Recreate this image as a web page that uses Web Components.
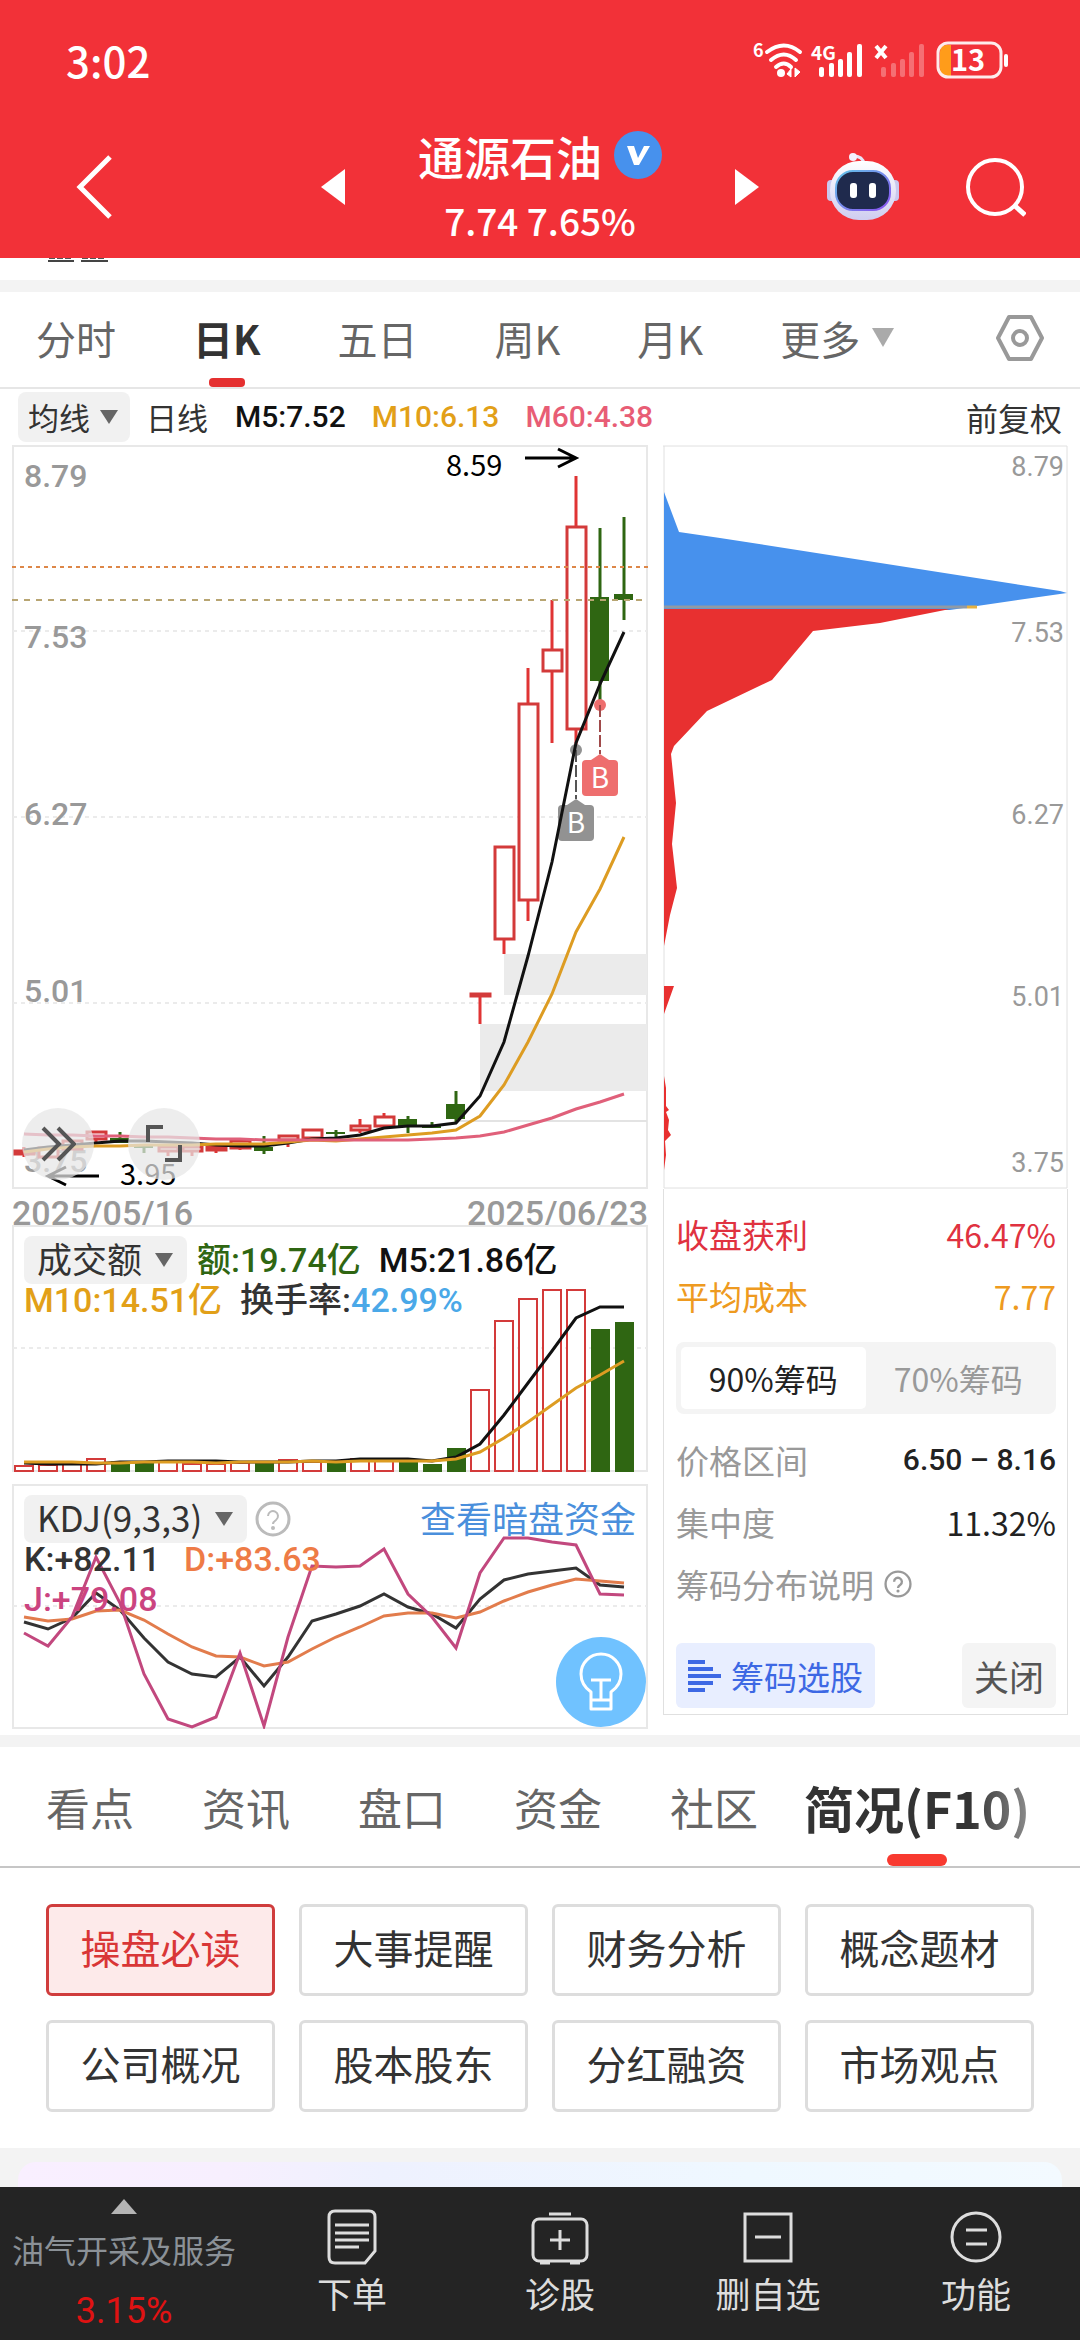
<!DOCTYPE html>
<html lang="zh-CN">

<head>
    <meta charset="UTF-8">
    <meta name="viewport" content="width=device-width, initial-scale=1">
    <title>通源石油</title>
    <style>
        body {
            margin: 0;
            background: #fff;
            color: #333;
            font-family: "Noto Sans CJK SC", sans-serif;
            --num: Roboto, "Noto Sans CJK SC", sans-serif;
        }

        stock-page {
            min-height: 100vh;
        }
    </style>
</head>

<body>
    <stock-page>
        <status-bar></status-bar>
        <title-bar name="通源石油" price="7.74 7.65%"></title-bar>
        <period-tabs></period-tabs>
        <average-row></average-row>
        <chart-area>
            <k-chart slot="left"></k-chart>
            <date-range slot="left"><span>2025/05/16</span><span>2025/06/23</span></date-range>
            <volume-chart slot="left"></volume-chart>
            <kdj-chart slot="left"></kdj-chart>
            <chip-chart slot="right"></chip-chart>
            <chip-panel slot="right"></chip-panel>
        </chart-area>
        <info-tabs></info-tabs>
        <topic-grid>
            <topic-button active>操盘必读</topic-button>
            <topic-button>大事提醒</topic-button>
            <topic-button>财务分析</topic-button>
            <topic-button>概念题材</topic-button>
            <topic-button>公司概况</topic-button>
            <topic-button>股本股东</topic-button>
            <topic-button>分红融资</topic-button>
            <topic-button>市场观点</topic-button>
        </topic-grid>
        <promo-card></promo-card>
        <bottom-bar></bottom-bar>
    </stock-page>
</body>

<script>
    const BASE = `
        :host, * { box-sizing: border-box; }
        button, select { font: inherit; color: inherit; border: 0; padding: 0; margin: 0; background: none; cursor: pointer; }
        svg { display: block; }
    `;

    function define(name, css, html) {
        const template = document.createElement('template');
        template.innerHTML = `<style>${BASE}${css}</style>${typeof html === 'string' ? html : ''}`;
        customElements.define(name, class extends HTMLElement {
            constructor() {
                super();
                this.attachShadow({ mode: 'open' });
                this.shadowRoot.appendChild(template.content.cloneNode(true));
                if (typeof html === 'function') {
                    this.shadowRoot.innerHTML += html(this);
                }
            }
        });
    }

    // one column per trading day, 24 units apart
    const dayX = i => 24 + 24 * i;
    const line = (ys, color, width = 3) =>
        `<polyline points="${ys.map((y, i) => dayX(i) + ',' + y).join(' ')}" fill="none" stroke="${color}" stroke-width="${width}"/>`;
    const gridLine = y =>
        `<line x1="13" x2="647" y1="${y}" y2="${y}" stroke="#ebebeb" stroke-width="2" stroke-dasharray="4 4"/>`;
    const frame = (y, h) =>
        `<rect x="13" y="${y}" width="634" height="${h}" fill="none" stroke="#e8e8e8" stroke-width="2"/>`;

    // [top, bottom, high, low, direction]
    const candles = [
        [1151, 1154, 1147, 1157, 1], [1148, 1157, 1148, 1157, 1], [1141, 1149, 1141, 1149, 1],
        [1132, 1139, 1132, 1144, 1], [1138, 1143, 1132, 1143, 0], [1146, 1148, 1146, 1153, 0],
        [1147, 1151, 1146, 1156, 1], [1147, 1151, 1146, 1156, 1], [1147, 1150, 1146, 1153, 1],
        [1141, 1148, 1141, 1150, 1], [1147, 1151, 1136, 1154, 0], [1136, 1140, 1135, 1147, 1],
        [1130, 1138, 1129, 1138, 1], [1132, 1134, 1130, 1137, 0], [1126, 1130, 1119, 1133, 1],
        [1117, 1126, 1113, 1126, 1], [1119, 1126, 1116, 1133, 0], [1126, 1128, 1122, 1128, 0],
        [1104, 1119, 1091, 1123, 0], [994, 996, 994, 1024, 1], [847, 939, 847, 954, 1],
        [704, 900, 668, 921, 1], [650, 671, 600, 743, 1], [527, 729, 476, 747, 1],
        [597, 681, 528, 703, 0], [594, 600, 517, 620, 0]
    ];

    const ma5 = [1150, 1147, 1145, 1143, 1141, 1141, 1142, 1143, 1145, 1146, 1146, 1143, 1139, 1138, 1135, 1128,
        1126, 1126, 1123, 1096, 1042, 956, 862, 743, 684, 632];
    const ma10 = [1152, 1149, 1147, 1146, 1146, 1145, 1145, 1145, 1144, 1144, 1144, 1142, 1140, 1141, 1139, 1137,
        1135, 1133, 1130, 1116, 1085, 1042, 994, 932, 889, 837];
    const ma60 = [1134, 1135, 1135, 1136, 1136, 1137, 1137, 1138, 1139, 1139, 1140, 1140, 1140, 1140, 1140, 1140,
        1140, 1139, 1138, 1136, 1132, 1125, 1118, 1109, 1102, 1094];

    function candle([top, bottom, high, low, up], i) {
        const x = dayX(i);
        if (!up) {
            return `<path d="M${x} ${high}V${low}" stroke="#2f6612" stroke-width="3"/>
                <rect x="${x - 10}" y="${top}" width="19" height="${bottom - top}" fill="#2f6612"/>`;
        }
        return `<path d="M${x} ${high}V${top}M${x} ${bottom}V${low}" stroke="#e03434" stroke-width="3"/>
            <rect x="${x - 9}" y="${top}" width="19" height="${bottom - top}" fill="#fff" stroke="#d33a3a" stroke-width="3"/>`;
    }

    const marker = (x, y, boxY, color, dash) => `
        <circle cx="${x}" cy="${y}" r="6" fill="${color}"/>
        <path d="M${x} ${y}V${boxY - 6}" stroke="${dash}" stroke-width="2" stroke-dasharray="12 3"/>
        <path d="M${x - 9} ${boxY}l9 -6l9 6z" fill="${color}"/>
        <rect x="${x - 18}" y="${boxY}" width="36" height="36" rx="4" fill="${color}"/>
        <text x="${x}" y="${boxY + 28}" font-size="28" text-anchor="middle" fill="#fff">B</text>`;

    // drop-down chip
    define('drop-chip', `
        :host { display: inline-grid; align-items: center; background: #f1f1f1; border-radius: 8px; }
        select, svg { grid-area: 1 / 1; }
        select { appearance: none; height: 48px; padding: 0 44px 4px 13px; border-radius: 8px; outline-offset: -2px; }
        :host([small]) select { height: 50px; padding: 0 40px 0 10px; }
        svg { width: 18px; height: 14px; justify-self: end; margin-right: 14px; pointer-events: none; }
        :host([small]) svg { margin-right: 12px; }
    `, el => `
        <select aria-label="${el.getAttribute('label')}"><option>${el.getAttribute('value')}</option></select>
        <svg viewBox="0 0 18 14"><path d="M0 0H18L9 14z" fill="#666"/></svg>
    `);

    define('status-bar', `
        :host { display: flex; justify-content: space-between; align-items: center; height: 120px;
            padding: 0 70px 0 66px; background: #f23138; color: #fff; }
        time { font-size: 42px; font-weight: 500; line-height: 64px; }
        svg { width: 258px; height: 60px; }
        text { font-weight: 700; fill: #fff; }
    `, `
        <time>3:02</time>
        <svg viewBox="752 29 258 60" role="img" aria-label="网络与电量">
            <text x="753" y="56" font-size="18">6</text>
            <g fill="none" stroke="#fff" stroke-width="4" stroke-linecap="round">
                <path d="M767 51q17 -13 33 0"/>
                <path d="M771 59q13 -11 25 0"/>
                <path d="M776 66q8 -7 15 0"/>
            </g>
            <circle cx="781" cy="72" r="4" fill="#fff"/>
            <path d="M787 73l4 -5v8zM800 71l-5 -4v9z" fill="#fff" stroke="#fff"/>
            <text x="811" y="59" font-size="19">4G</text>
            <g fill="#fff">
                <rect x="819" y="66" width="5" height="10" rx="2"/>
                <rect x="829" y="62" width="5" height="14" rx="2"/>
                <rect x="838" y="58" width="5" height="18" rx="2"/>
                <rect x="847" y="51" width="5" height="25" rx="2"/>
                <rect x="857" y="43" width="5" height="33" rx="2"/>
            </g>
            <path d="M876 45l10 12M886 45l-10 12" stroke="#fff" stroke-width="4"/>
            <g fill="#fff" opacity=".3">
                <rect x="881" y="66" width="5" height="10" rx="2"/>
                <rect x="891" y="62" width="5" height="14" rx="2"/>
                <rect x="900" y="58" width="5" height="18" rx="2"/>
                <rect x="909" y="51" width="5" height="25" rx="2"/>
                <rect x="919" y="43" width="5" height="33" rx="2"/>
            </g>
            <path d="M951 44H946q-6 0 -6 7V68q0 7 6 7H951z" fill="#ff9c1a"/>
            <rect x="938" y="42" width="63" height="34" rx="10" fill="none" stroke="#fdecec" stroke-width="3"/>
            <text x="951" y="70" font-size="29">13</text>
            <path d="M1006 55v9" stroke="#fff" stroke-width="4" stroke-linecap="round"/>
        </svg>
    `);

    define('title-bar', `
        :host { display: grid; grid-template-columns: 1fr 390px 1fr; align-items: center; height: 138px;
            padding-bottom: 4px; background: #f23138; color: #fff; }
        .side { display: flex; align-items: center; justify-content: space-between; }
        .side.left { padding-left: 74px; }
        .side.right { padding-right: 54px; }
        h1 { display: flex; justify-content: center; align-items: center; gap: 12px; margin: 0;
            font-size: 46px; font-weight: 500; line-height: 66px; }
        p { margin: 0; text-align: center; font-size: 37px; font-weight: 500; line-height: 64px; }
    `, el => `
        <div class="side left">
            <button aria-label="返回"><svg width="40" height="66" viewBox="0 0 40 66"><path d="M36 3L6 33L36 63" fill="none" stroke="#fff" stroke-width="5"/></svg></button>
            <button aria-label="上一只"><svg width="24" height="36" viewBox="0 0 24 36"><path d="M24 0V36L0 18z" fill="#fff"/></svg></button>
        </div>
        <div>
            <h1>${el.getAttribute('name')}<svg width="48" height="48" viewBox="0 0 48 48"><circle cx="24" cy="24" r="24" fill="#4791ed"/><path d="M13 15h7l4 12l6 -12h6l-11 19h-5z" fill="#fff"/></svg></h1>
            <p>${el.getAttribute('price')}</p>
        </div>
        <div class="side right">
            <button aria-label="下一只"><svg width="24" height="36" viewBox="0 0 24 36"><path d="M0 0V36L24 18z" fill="#fff"/></svg></button>
            <button aria-label="智能助手">
                <svg width="72" height="70" viewBox="0 0 72 70">
                    <defs>
                        <linearGradient id="shell" x1="0" y1="0" x2="0" y2="1"><stop offset="0" stop-color="#fff"/><stop offset="1" stop-color="#cfcdf0"/></linearGradient>
                        <linearGradient id="rim" x1="0" y1="0" x2="1" y2="1"><stop offset="0" stop-color="#63c5e8"/><stop offset="1" stop-color="#8a4ff0"/></linearGradient>
                    </defs>
                    <path d="M37 12Q36 4 26 4" fill="none" stroke="#e8e6f8" stroke-width="3"/>
                    <circle cx="26" cy="5" r="4" fill="#f4f2ff"/>
                    <rect x="0" y="28" width="9" height="21" rx="4" fill="#c9c8ee"/>
                    <rect x="63" y="28" width="9" height="21" rx="4" fill="#c9c8ee"/>
                    <rect x="3" y="9" width="66" height="59" rx="29" fill="url(#shell)"/>
                    <rect x="9" y="19" width="54" height="39" rx="17" fill="#1f2a4d" stroke="url(#rim)" stroke-width="2"/>
                    <rect x="23" y="31" width="7" height="15" rx="3" fill="#fff"/>
                    <rect x="42" y="31" width="7" height="15" rx="3" fill="#fff"/>
                </svg>
            </button>
            <button aria-label="搜索"><svg width="60" height="60" viewBox="0 0 60 60"><circle cx="29" cy="30" r="27" fill="none" stroke="#fff" stroke-width="4"/><path d="M48 48L59 58" stroke="#fff" stroke-width="5"/></svg></button>
        </div>
    `);

    define('period-tabs', `
        :host { display: block; background: #f3f3f3; }
        .cut { height: 22px; padding-left: 48px; background: #fff; }
        nav { display: flex; align-items: center; gap: 77px; height: 97px; margin-top: 12px; padding: 0 35px 0 36px;
            background: #fff; border-bottom: 2px solid #e6e6e6; font-size: 40px; color: #666; }
        button { position: relative; height: 95px; padding-bottom: 4px; white-space: nowrap; }
        .on { color: #333; font-weight: 700; }
        .on::after { content: ""; position: absolute; left: 50%; bottom: 0; width: 36px; height: 9px;
            margin-left: -18px; border-radius: 4px; background: #e53030; }
        .more { display: flex; align-items: center; gap: 12px; }
        .set { margin-left: auto; }
    `, `
        <div class="cut"><svg width="60" height="4" viewBox="0 0 60 4"><path d="M1 0H24M34 0H56" stroke="#555" stroke-width="2" stroke-dasharray="6 2"/><path d="M0 3H26M33 3H60" stroke="#444" stroke-width="2"/></svg></div>
        <nav>
            <button>分时</button>
            <button class="on">日K</button>
            <button>五日</button>
            <button>周K</button>
            <button>月K</button>
            <button class="more">更多<svg width="22" height="19" viewBox="0 0 22 19"><path d="M0 0H22L11 19z" fill="#aaa"/></svg></button>
            <button class="set" aria-label="设置"><svg width="50" height="48" viewBox="0 0 50 48"><path d="M14 3H36L47 24L36 45H14L3 24z" fill="none" stroke="#999" stroke-width="4" stroke-linejoin="round"/><circle cx="25" cy="24" r="7" fill="none" stroke="#999" stroke-width="4"/></svg></button>
        </nav>
    `);

    define('average-row', `
        :host { display: flex; align-items: center; height: 56px; padding: 0 18px; font-size: 31px; line-height: 50px; }
        .day { margin: 0 27px 0 16px; }
        .num { margin-right: 26px; font: 500 30px/50px var(--num); }
        .right { margin-left: auto; font-size: 32px; }
    `, `
        <drop-chip small label="指标" value="均线"></drop-chip>
        <span class="day">日线</span>
        <span class="num" style="color:#111">M5:7.52</span>
        <span class="num" style="color:#e2a018">M10:6.13</span>
        <span class="num" style="color:#e85d75">M60:4.38</span>
        <span class="right">前复权</span>
    `);

    define('chart-area', `
        :host { display: grid; grid-template-columns: 636fr 405fr; gap: 15px; align-items: start; padding: 0 12px; }
        div { display: flex; flex-direction: column; min-width: 0; }
    `, `<div><slot name="left"></slot></div><div><slot name="right"></slot></div>`);

    define('k-chart', `
        :host { display: block; position: relative; }
        svg.plot { width: 100%; height: auto; }
        .axis { font: 500 32px var(--num); fill: #999; }
        .mark { font-size: 29px; fill: #000; }
        .tools { position: absolute; left: 10px; bottom: 9px; display: flex; gap: 34px; }
        .tools button { display: grid; place-items: center; width: 72px; height: 72px; border-radius: 50%; background: #e6e6e6b8; }
    `, `
        <svg class="plot" viewBox="12 445 636 744">
            ${frame(446, 742)}
            ${[631, 817, 1003].map(gridLine).join('')}
            <path d="M504 954H647V995H504zM480 1024H647V1091H480z" fill="#ebebeb"/>
            <path d="M456 1121H647" stroke="#e3e3e3" stroke-width="2"/>
            <g class="axis">
                <text x="24" y="487">8.79</text>
                <text x="24" y="648">7.53</text>
                <text x="24" y="825">6.27</text>
                <text x="24" y="1002">5.01</text>
                <text x="24" y="1172">3.75</text>
            </g>
            ${candles.map(candle).join('')}
            <path d="M12 567H648" stroke="#dd8748" stroke-width="2" stroke-dasharray="4 4"/>
            <path d="M12 600H648" stroke="#b8a572" stroke-width="2" stroke-dasharray="6 6"/>
            ${marker(576, 750, 805, '#929292', '#555')}
            ${marker(600, 705, 760, '#ee6e6e', '#a04a4a')}
            ${line(ma5, '#111')}
            ${line(ma10, '#dd9c22')}
            ${line(ma60, '#e0607a')}
            <g class="mark">
                <text x="446" y="476">8.59</text>
                <text x="120" y="1185">3.95</text>
            </g>
            <path d="M525 458H575M558 449L576 458L558 467M99 1176H49M66 1167L48 1176L66 1185" fill="none" stroke="#000" stroke-width="3"/>
        </svg>
        <div class="tools">
            <button aria-label="展开"><svg width="36" height="38" viewBox="0 0 36 38"><path d="M3 3L19 19L3 35M18 3L34 19L18 35" fill="none" stroke="#555" stroke-width="4"/></svg></button>
            <button aria-label="全屏"><svg width="36" height="38" viewBox="0 0 36 38"><path d="M2 17V2H17M34 20V35H19" fill="none" stroke="#555" stroke-width="4"/></svg></button>
        </div>
    `);

    define('date-range', `
        :host { display: flex; justify-content: space-between; height: 36px; font: 500 34px/48px var(--num); color: #999; }
    `, `<slot></slot>`);

    // [top of the bar, direction]
    const volumes = [[1466, 1], [1465, 1], [1463, 1], [1459, 1], [1461, 0], [1462, 0], [1462, 1], [1464, 1],
        [1464, 1], [1463, 1], [1462, 0], [1460, 1], [1462, 1], [1462, 0], [1459, 1], [1461, 1], [1461, 0],
        [1464, 0], [1448, 0], [1390, 1], [1321, 1], [1299, 1], [1290, 1], [1290, 1], [1329, 0], [1322, 0]];
    const vol5 = [1463, 1464, 1464, 1464, 1462, 1462, 1461, 1461, 1461, 1462, 1462, 1462, 1461, 1461, 1459, 1459,
        1459, 1461, 1457, 1444, 1415, 1383, 1351, 1318, 1307, 1307];
    const vol10 = [1462, 1462, 1462, 1463, 1463, 1462, 1462, 1462, 1463, 1462, 1462, 1462, 1461, 1462, 1461, 1461,
        1461, 1461, 1459, 1452, 1438, 1422, 1405, 1388, 1375, 1361];

    const LEGEND = `
        :host { display: grid; }
        .plot, .legend { grid-area: 1 / 1; min-width: 0; }
        .plot { width: 100%; height: auto; }
        .legend { padding: 11px 12px; font: 500 34px/32px var(--num); }
        .row { display: flex; align-items: center; gap: 18px; white-space: nowrap; }
        drop-chip { font: 400 35px/44px "Noto Sans CJK SC", sans-serif; color: #333; }
    `;

    define('volume-chart', LEGEND, `
        <svg class="plot" viewBox="12 1225 636 247">
            ${frame(1226, 245)}
            ${gridLine(1348)}
            ${volumes.map(([y, up], i) => up
                ? `<rect x="${dayX(i) - 9}" y="${y}" width="18" height="${1471 - y}" fill="#fff" stroke="#d33a3a" stroke-width="2"/>`
                : `<rect x="${dayX(i) - 9}" y="${y}" width="19" height="${1472 - y}" fill="#2f6612"/>`).join('')}
            ${line(vol5, '#111')}
            ${line(vol10, '#dd9c22')}
        </svg>
        <div class="legend">
            <div class="row">
                <drop-chip label="副图指标" value="成交额"></drop-chip>
                <span style="color:#2f6612;margin-left:-8px">额:19.74亿</span>
                <span style="color:#111">M5:21.86亿</span>
            </div>
            <div class="row">
                <span style="color:#e2a018">M10:14.51亿</span>
                <span>换手率:<span style="color:#4aa8e8">42.99%</span></span>
            </div>
        </div>
    `);

    const kLine = [1622, 1629, 1618, 1593, 1610, 1638, 1662, 1674, 1677, 1657, 1686, 1657, 1621, 1614, 1606, 1594,
        1607, 1614, 1628, 1599, 1580, 1574, 1571, 1568, 1585, 1587];
    const dLine = [1617, 1621, 1619, 1611, 1610, 1620, 1634, 1647, 1656, 1657, 1666, 1662, 1649, 1637, 1627, 1616,
        1613, 1613, 1618, 1612, 1601, 1592, 1585, 1579, 1581, 1583];
    const jLine = [1633, 1646, 1617, 1557, 1603, 1674, 1719, 1727, 1717, 1653, 1726, 1637, 1566, 1567, 1566, 1549,
        1594, 1617, 1648, 1573, 1538, 1538, 1542, 1545, 1594, 1595];

    define('kdj-chart', LEGEND + `
        :host { position: relative; margin-top: 12px; }
        .row + .row { margin-bottom: 8px; gap: 24px; }
        a { margin-left: auto; padding-bottom: 4px; color: #4a8fdc; font: 400 36px/44px "Noto Sans CJK SC", sans-serif; text-decoration: none; }
        .tip { position: absolute; right: 2px; bottom: 2px; width: 90px; height: 90px; border-radius: 50%;
            background: #70c2ff; display: grid; place-items: center; }
    `, `
        <svg class="plot" viewBox="12 1484 636 245">
            ${frame(1485, 243)}
            ${gridLine(1606)}
            ${line(kLine, '#333')}
            ${line(dLine, '#e27c4c')}
            ${line(jLine, '#c2487e')}
        </svg>
        <div class="legend">
            <div class="row">
                <drop-chip label="副图指标" value="KDJ(9,3,3)"></drop-chip>
                <button aria-label="指标说明" style="margin-left:-10px"><svg width="36" height="36" viewBox="0 0 36 36"><circle cx="18" cy="18" r="16" fill="none" stroke="#bbb" stroke-width="3"/><path d="M13 15a5 5 0 1 1 8 4q-3 2 -3 4" fill="none" stroke="#bbb" stroke-width="2"/><circle cx="18" cy="27" r="2" fill="#bbb"/></svg></button>
                <a href="#fund">查看暗盘资金</a>
            </div>
            <div class="row">
                <span>K:+82.11</span>
                <span style="color:#ee7b46">D:+83.63</span>
            </div>
            <div class="row">
                <span style="color:#cb4480">J:+79.08</span>
            </div>
        </div>
        <button class="tip" aria-label="提示">
            <svg width="44" height="60" viewBox="0 0 44 60" fill="none" stroke="#fff" stroke-width="3" stroke-linejoin="round">
                <path d="M12 48V40Q2 33 2 22a20 20 0 0 1 40 0Q42 33 32 40V48M12 48H32V57H12zM12 28H32M22 28V48"/>
            </svg>
        </button>
    `);

    define('chip-chart', `
        :host { display: block; }
        svg { width: 100%; height: auto; }
        text { font: 400 27px var(--num); fill: #999; text-anchor: end; }
    `, `
        <svg viewBox="663 445 405 744">
            <path d="M663 446H1067V1188H664V446" fill="none" stroke="#e0e0e0" stroke-width="1"/>
            <path d="M664 492L679 532L720 538L1060 591L1067 593L977 606L950 610H664z" fill="#4791ed"/>
            <path d="M664 609H950L880 623L813 631L772 680L707 711L674 746L671 754L676 803L672 844L677 888L670 915L664 946z" fill="#e83030"/>
            <path d="M664 986H674L664 1014zM664 1076L666 1088V1106L669 1110L666 1112L669 1120L668 1130L671 1135L665 1141L666 1155L664 1170z" fill="#e83030"/>
            <path d="M664 607H967" stroke="#8f9aa6" stroke-width="3"/>
            <path d="M967 607H977" stroke="#e5b040" stroke-width="3"/>
            <text x="1064" y="476">8.79</text>
            <text x="1064" y="642">7.53</text>
            <text x="1064" y="824">6.27</text>
            <text x="1064" y="1006">5.01</text>
            <text x="1064" y="1172">3.75</text>
        </svg>
    `);

    define('chip-panel', `
        :host { display: block; padding: 14px 11px 6px 12px; border: 1px solid #e0e0e0; border-top: 0; font-size: 33px; line-height: 62px; }
        dl { margin: 0; }
        dl div { display: flex; justify-content: space-between; }
        dd { margin: 0; color: #222; font-size: 32px; }
        dl.grey dt, .note { color: #999; }
        .range { font: 500 30px/62px var(--num); }
        .seg { display: grid; grid-template-columns: 185fr 186fr; margin: 15px 0; padding: 5px; border-radius: 8px; background: #f4f4f4; color: #999; font-size: 32px; }
        .seg button { height: 62px; border-radius: 5px; }
        .seg .on { background: #fff; color: #222; }
        .note { display: flex; align-items: center; gap: 10px; margin-bottom: 28px; }
        .foot { display: flex; justify-content: space-between; }
        .foot button { display: flex; align-items: center; gap: 10px; height: 65px; padding: 0 12px; border-radius: 6px; }
        .pick { background: #e8eeff; color: #3d68e4; }
        .close { background: #f4f4f4; color: #555; font-size: 35px; }
    `, `
        <dl>
            <div style="color:#e03240"><dt>收盘获利</dt><dd style="color:inherit">46.47%</dd></div>
            <div style="color:#ee9a20"><dt>平均成本</dt><dd style="color:inherit">7.77</dd></div>
        </dl>
        <div class="seg">
            <button class="on" aria-pressed="true">90%筹码</button>
            <button aria-pressed="false">70%筹码</button>
        </div>
        <dl class="grey">
            <div><dt>价格区间</dt><dd class="range">6.50 – 8.16</dd></div>
            <div><dt>集中度</dt><dd>11.32%</dd></div>
        </dl>
        <div class="note">筹码分布说明<svg width="28" height="28" viewBox="0 0 36 36"><circle cx="18" cy="18" r="16" fill="none" stroke="#999" stroke-width="3"/><path d="M13 15a5 5 0 1 1 8 4q-3 2 -3 4" fill="none" stroke="#999" stroke-width="3"/><circle cx="18" cy="27" r="2" fill="#999"/></svg></div>
        <div class="foot">
            <button class="pick"><svg width="33" height="32" viewBox="0 0 33 32"><path d="M0 2H17M0 9H25M0 16H33M0 23H25M0 30H17" stroke="#3d68e4" stroke-width="4"/></svg>筹码选股</button>
            <button class="close">关闭</button>
        </div>
    `);

    define('info-tabs', `
        :host { display: block; margin-top: 6px; border-top: 12px solid #f3f3f3; }
        nav { position: relative; display: flex; align-items: center; height: 121px; padding: 0 12px;
            border-bottom: 2px solid #c6c6c6; font-size: 44px; color: #666; overflow: hidden; }
        nav::after { content: ""; position: absolute; right: 0; top: 0; width: 110px; height: 100px;
            background: linear-gradient(90deg, #fff0, #ffffffd0); pointer-events: none; }
        button { position: relative; flex: none; height: 119px; padding: 0 34px; white-space: nowrap; }
        .on { padding: 0 12px; color: #333; font-size: 50px; font-weight: 700; }
        .on::after { content: ""; position: absolute; left: 50%; bottom: 0; width: 60px; height: 12px;
            margin-left: -30px; border-radius: 6px; background: #f83a30; }
    `, `
        <nav>
            <button>看点</button>
            <button>资讯</button>
            <button>盘口</button>
            <button>资金</button>
            <button>社区</button>
            <button class="on">简况(F10)</button>
        </nav>
    `);

    define('topic-grid', `
        :host { display: grid; grid-template-columns: repeat(4, 1fr); gap: 24px; padding: 36px 46px; }
    `, `<slot></slot>`);

    define('topic-button', `
        :host { display: block; font-size: 40px; color: #333; }
        button { width: 100%; height: 92px; padding-bottom: 6px; border: 3px solid #ddd; border-radius: 6px; white-space: nowrap; }
        :host([active]) { color: #d93636; }
        :host([active]) button { border-color: #d03c3c; background: #fdeaea; }
    `, `<button><slot></slot></button>`);

    define('promo-card', `
        :host { display: flex; flex: 1; padding: 14px 18px 0; background: #f3f3f3; }
        div { flex: 1; min-height: 24px; border-radius: 18px 18px 0 0;
            background: linear-gradient(90deg, #f9efff, #f7effe 20%, #eef1fe 35%, #eff8ff 70%, #f3faff); }
    `, `<div></div>`);

    define('bottom-bar', `
        :host { position: sticky; bottom: 0; display: grid; grid-template-columns: 248px repeat(4, 1fr); height: 153px;
            background: #242424; color: #ddd; font-size: 35px; }
        button { display: flex; flex-direction: column; align-items: center; padding-top: 20px; white-space: nowrap; }
        button svg { width: 60px; height: 60px; }
        button span { line-height: 52px; }
        .sector { padding-top: 12px; font-size: 32px; color: #8b9197; }
        .sector svg { width: 26px; height: 15px; }
        .sector span { line-height: 70px; }
        .sector b { font: 400 36px/54px var(--num); color: #e01212; }
    `, `
        <button class="sector">
            <svg viewBox="0 0 26 15"><path d="M0 15L13 0L26 15z" fill="#b4b4b4"/></svg>
            <span>油气开采及服务</span><b>3.15%</b>
        </button>
        <button>
            <svg viewBox="0 0 60 60" fill="none" stroke="#ddd" stroke-width="3"><path d="M13 4H47Q53 4 53 10V44L43 56H13Q7 56 7 50V10Q7 4 13 4zM13 18H47M13 26H47M13 33H47M13 40H37"/></svg>
            <span>下单</span>
        </button>
        <button>
            <svg viewBox="0 0 60 60" fill="none" stroke="#ddd" stroke-width="3"><rect x="3" y="12" width="54" height="42" rx="6"/><path d="M19 7H41M20 33H40M30 23V43M10 56H20M40 56H50"/></svg>
            <span>诊股</span>
        </button>
        <button>
            <svg viewBox="0 0 60 60" fill="none" stroke="#ddd" stroke-width="3"><path d="M7 7H53V54H7zM17 30H43"/></svg>
            <span>删自选</span>
        </button>
        <button>
            <svg viewBox="0 0 60 60" fill="none" stroke="#ddd" stroke-width="3"><circle cx="30" cy="30" r="24"/><path d="M20 23H41M20 37H41"/></svg>
            <span>功能</span>
        </button>
    `);

    define('stock-page', `
        :host { display: flex; flex-direction: column; }
    `, `<slot></slot>`);
</script>

</html>
